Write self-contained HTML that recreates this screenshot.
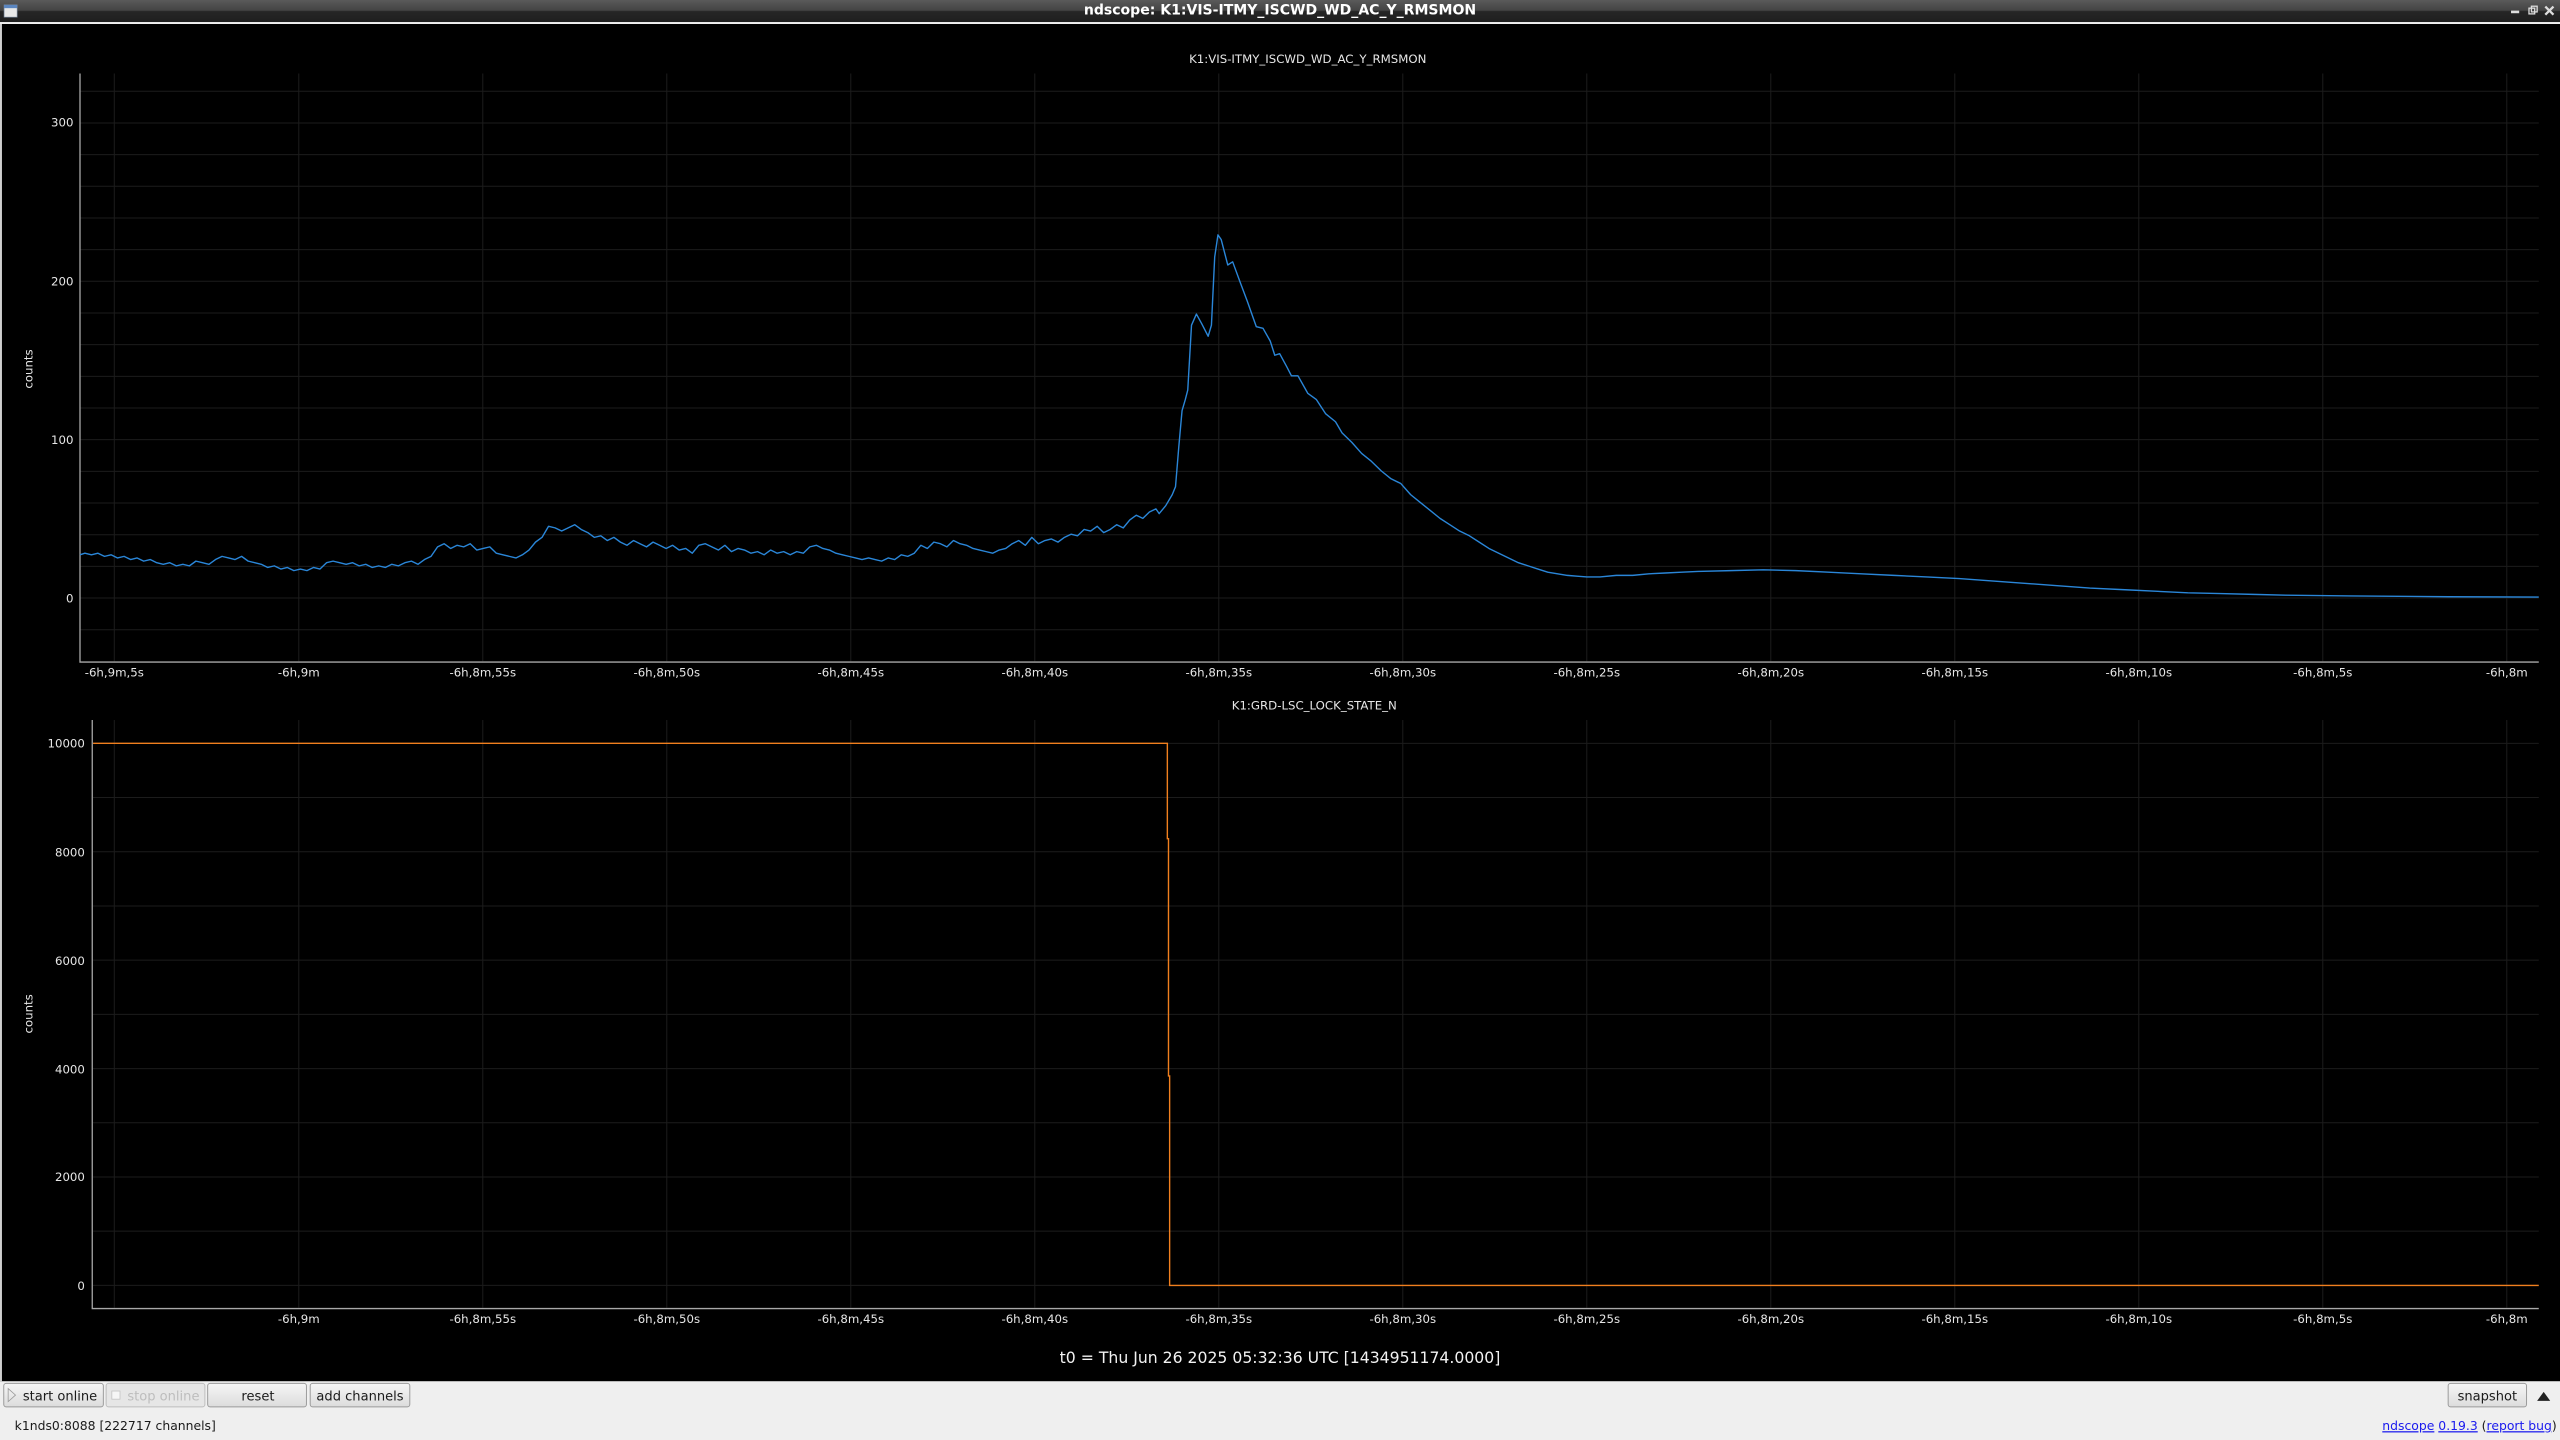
<!DOCTYPE html>
<html><head><meta charset="utf-8">
<style>
html,body{margin:0;padding:0;background:#000;overflow:hidden}
svg{display:block}
text{font-family:"DejaVu Sans","Liberation Sans",sans-serif}
</style></head>
<body>
<svg width="2560" height="1440" viewBox="0 0 1568 882" preserveAspectRatio="none" xmlns="http://www.w3.org/2000/svg">
<defs>
<linearGradient id="tb" x1="0" y1="0" x2="0" y2="1">
<stop offset="0" stop-color="#5a5a5a"/><stop offset="0.45" stop-color="#444"/><stop offset="0.5" stop-color="#262626"/><stop offset="1" stop-color="#1e1e1e"/>
</linearGradient>
<linearGradient id="btn" x1="0" y1="0" x2="0" y2="1">
<stop offset="0" stop-color="#f6f6f6"/><stop offset="1" stop-color="#dcdcdc"/>
</linearGradient>
</defs>
<!-- title bar -->
<rect x="0" y="0" width="1568" height="14" fill="url(#tb)"/>
<rect x="0" y="13.5" width="1568" height="1.2" fill="#f0f0f0"/>
<rect x="2.5" y="3" width="8" height="7.5" fill="#e8e8e8" stroke="#7a8aa0" stroke-width="0.4"/>
<rect x="2.5" y="3" width="8" height="2" fill="#5b86c0"/>
<text x="784" y="9" text-anchor="middle" font-size="8.6" font-weight="bold" fill="#fff">ndscope: K1:VIS-ITMY_ISCWD_WD_AC_Y_RMSMON</text>
<rect x="1538" y="6.5" width="5" height="1.6" fill="#ddd"/>
<rect x="1549" y="5" width="3.5" height="3.5" fill="none" stroke="#ddd" stroke-width="0.8"/>
<rect x="1550.5" y="3.8" width="3.5" height="3.5" fill="none" stroke="#ddd" stroke-width="0.8"/>
<path d="M1559 4 L1564 9 M1564 4 L1559 9" stroke="#ddd" stroke-width="1.4"/>
<!-- black area -->
<rect x="0" y="14.7" width="1568" height="831.3" fill="#000"/>
<rect x="0" y="14.7" width="1.2" height="831.3" fill="#cfcfcf"/>

<!-- TOP PLOT grid -->
<g stroke="#1c1c1c" stroke-width="1" vector-effect="non-scaling-stroke">
<path vector-effect="non-scaling-stroke" d="M49 55.9H1555 M49 75.3H1555 M49 94.7H1555 M49 114.1H1555 M49 133.5H1555 M49 152.9H1555 M49 172.3H1555 M49 191.7H1555 M49 211.1H1555 M49 230.5H1555 M49 249.9H1555 M49 269.3H1555 M49 288.7H1555 M49 308.1H1555 M49 327.5H1555 M49 346.9H1555 M49 366.3H1555 M49 385.7H1555"/>
<path vector-effect="non-scaling-stroke" d="M70 45V405 M183 45V405 M295.7 45V405 M408.4 45V405 M521.1 45V405 M633.8 45V405 M746.5 45V405 M859.2 45V405 M971.9 45V405 M1084.6 45V405 M1197.3 45V405 M1310 45V405 M1422.7 45V405 M1535.4 45V405"/>
</g>
<path d="M49 45V405.5H1555" fill="none" stroke="#a8a8a8" stroke-width="1.3" vector-effect="non-scaling-stroke"/>
<g font-size="7.2" fill="#e6e6e6">
<text x="801" y="38.5" text-anchor="middle">K1:VIS-ITMY_ISCWD_WD_AC_Y_RMSMON</text>
<text x="45" y="77.5" text-anchor="end">300</text>
<text x="45" y="175" text-anchor="end">200</text>
<text x="45" y="272" text-anchor="end">100</text>
<text x="45" y="369" text-anchor="end">0</text>
<text transform="translate(20,226) rotate(-90)" text-anchor="middle">counts</text>
</g>
<g font-size="7.2" fill="#e6e6e6" text-anchor="middle">
<text x="70" y="414.5">-6h,9m,5s</text>
<text x="183" y="414.5">-6h,9m</text>
<text x="295.7" y="414.5">-6h,8m,55s</text>
<text x="408.4" y="414.5">-6h,8m,50s</text>
<text x="521.1" y="414.5">-6h,8m,45s</text>
<text x="633.8" y="414.5">-6h,8m,40s</text>
<text x="746.5" y="414.5">-6h,8m,35s</text>
<text x="859.2" y="414.5">-6h,8m,30s</text>
<text x="971.9" y="414.5">-6h,8m,25s</text>
<text x="1084.6" y="414.5">-6h,8m,20s</text>
<text x="1197.3" y="414.5">-6h,8m,15s</text>
<text x="1310" y="414.5">-6h,8m,10s</text>
<text x="1422.7" y="414.5">-6h,8m,5s</text>
<text x="1535.4" y="414.5">-6h,8m</text>
</g>
<g transform="translate(0,366) scale(1,-0.97)">
<polyline fill="none" stroke="#2a86d8" stroke-width="1.4" vector-effect="non-scaling-stroke" stroke-linejoin="round" points="49,27 52,28 56,27 60,28 64,26 68,27 72,25 76,26 80,24 84,25 88,23 92,24 96,22 100,21 104,22 108,20 112,21 116,20 120,23 124,22 128,21 132,24 136,26 140,25 144,24 148,26 152,23 156,22 160,21 164,19 168,20 172,18 176,19 180,17 184,18 188,17 192,19 196,18 200,22 204,23 208,22 212,21 216,22 220,20 224,21 228,19 232,20 236,19 240,21 244,20 248,22 252,23 256,21 260,24 264,26 268,32 272,34 276,31 280,33 284,32 288,34 292,30 296,31 300,32 304,28 308,27 312,26 316,25 320,27 324,30 328,35 332,38 336,45 340,44 344,42 348,44 352,46 356,43 360,41 364,38 368,39 372,36 376,38 380,35 384,33 388,36 392,34 396,32 400,35 404,33 408,31 412,33 416,30 420,31 424,28 428,33 432,34 436,32 440,30 444,33 448,29 452,31 456,30 460,28 464,29 468,27 472,30 476,28 480,29 484,27 488,29 492,28 496,32 500,33 504,31 508,30 512,28 516,27 520,26 524,25 528,24 532,25 536,24 540,23 544,25 548,24 552,27 556,26 560,28 564,33 568,31 572,35 576,34 580,32 584,36 588,34 592,33 596,31 600,30 604,29 608,28 612,30 616,31 620,34 624,36 628,33 632,38 636,34 640,36 644,37 648,35 652,38 656,40 660,39 664,43 668,42 672,45 676,41 680,43 684,46 688,44 692,49 696,52 700,50 704,54 708,56 710,53 714,58 718,65 720,70 722,95 724,118 726,125 727.5,131 729.8,172 732.8,179 736,173 740,165 742,172 744,215 746,229 748,226 752,210 755,212 760,198 764,187 769.5,171 773.6,170 778,162 780.8,153 783.8,154 788,146 791,140 795,140 801,129 806.3,125 812,116 818,111 822,104 828,98 834,91 840,86 846,80 852,75 858,72 864,65 870,60 876,55 882,50 888,46 894,42 900,39 906,35 912,31 918,28 924,25 930,22 936,20 942,18 948,16 954,15 960,14 966,13.5 972,13 980,13 990,14 1000,14 1010,15 1020,15.5 1030,16 1040,16.5 1060,17 1080,17.5 1100,17 1120,16 1140,15 1160,14 1180,13 1200,12 1220,10.5 1240,9 1260,7.5 1280,6 1300,5 1320,4 1340,3 1360,2.5 1380,2 1400,1.5 1440,1 1500,0.5 1555,0.3"/>
</g>

<!-- BOTTOM PLOT grid -->
<g stroke="#1c1c1c" stroke-width="1">
<path vector-effect="non-scaling-stroke" d="M57 455.3H1555 M57 488.5H1555 M57 521.7H1555 M57 554.9H1555 M57 588.1H1555 M57 621.3H1555 M57 654.5H1555 M57 687.7H1555 M57 720.9H1555 M57 754.1H1555 M57 787.3H1555"/>
<path vector-effect="non-scaling-stroke" d="M70 441V801 M183 441V801 M295.7 441V801 M408.4 441V801 M521.1 441V801 M633.8 441V801 M746.5 441V801 M859.2 441V801 M971.9 441V801 M1084.6 441V801 M1197.3 441V801 M1310 441V801 M1422.7 441V801 M1535.4 441V801"/>
</g>
<path d="M56.5 441V801.5H1555" fill="none" stroke="#a8a8a8" stroke-width="1.3" vector-effect="non-scaling-stroke"/>
<g font-size="7.2" fill="#e6e6e6">
<text x="805" y="434.5" text-anchor="middle">K1:GRD-LSC_LOCK_STATE_N</text>
<text x="52" y="458" text-anchor="end">10000</text>
<text x="52" y="524.5" text-anchor="end">8000</text>
<text x="52" y="591" text-anchor="end">6000</text>
<text x="52" y="657.5" text-anchor="end">4000</text>
<text x="52" y="723.5" text-anchor="end">2000</text>
<text x="52" y="790" text-anchor="end">0</text>
<text transform="translate(20,621) rotate(-90)" text-anchor="middle">counts</text>
</g>
<g font-size="7.2" fill="#e6e6e6" text-anchor="middle">
<text x="183" y="810.5">-6h,9m</text>
<text x="295.7" y="810.5">-6h,8m,55s</text>
<text x="408.4" y="810.5">-6h,8m,50s</text>
<text x="521.1" y="810.5">-6h,8m,45s</text>
<text x="633.8" y="810.5">-6h,8m,40s</text>
<text x="746.5" y="810.5">-6h,8m,35s</text>
<text x="859.2" y="810.5">-6h,8m,30s</text>
<text x="971.9" y="810.5">-6h,8m,25s</text>
<text x="1084.6" y="810.5">-6h,8m,20s</text>
<text x="1197.3" y="810.5">-6h,8m,15s</text>
<text x="1310" y="810.5">-6h,8m,10s</text>
<text x="1422.7" y="810.5">-6h,8m,5s</text>
<text x="1535.4" y="810.5">-6h,8m</text>
</g>
<polyline fill="none" stroke="#f07f1e" stroke-width="1.4" vector-effect="non-scaling-stroke" points="57,455.3 715,455.3 715,513.7 715.7,513.7 715.7,659 716.4,659 716.4,787.3 1555,787.3"/>

<text x="784" y="835" text-anchor="middle" font-size="9.6" fill="#f2f2f2">t0 = Thu Jun 26 2025 05:32:36 UTC [1434951174.0000]</text>

<!-- bottom bar -->
<rect x="0" y="846" width="1568" height="36" fill="#efefef"/>
<g stroke="#9a9a9a" stroke-width="0.6">
<rect x="2.3" y="847.3" width="61" height="14.4" rx="1.5" fill="url(#btn)"/>
<rect x="65" y="847.3" width="60.5" height="14.4" rx="1.5" fill="#e6e6e6" stroke="#bdbdbd"/>
<rect x="127.2" y="847.3" width="60.5" height="14.4" rx="1.5" fill="url(#btn)"/>
<rect x="190" y="847.3" width="61" height="14.4" rx="1.5" fill="url(#btn)"/>
<rect x="1499.5" y="847.3" width="48" height="14.4" rx="1.5" fill="url(#btn)"/>
</g>
<path d="M5 850.5 L9.5 854.5 L5 858.5Z" fill="none" stroke="#9a9a9a" stroke-width="0.5"/>
<rect x="68.5" y="852" width="5" height="5" fill="#f6f6f6" stroke="#c4c4c4" stroke-width="0.5"/>
<path d="M1554 858 L1558 852.5 L1562 858Z" fill="#222"/>
<g font-size="8" fill="#1a1a1a">
<text x="14" y="857.8">start online</text>
<text x="78" y="857.8" fill="#bdbdbd">stop online</text>
<text x="158" y="857.8" text-anchor="middle">reset</text>
<text x="220.5" y="857.8" text-anchor="middle">add channels</text>
<text x="1523.5" y="857.8" text-anchor="middle">snapshot</text>
<text x="9" y="876" font-size="7.6">k1nds0:8088  [222717 channels]</text>
</g>
<g font-size="7.6">
<text x="1566" y="876" text-anchor="end" fill="#1a1a1a"><tspan fill="#1a1aee" text-decoration="underline">ndscope</tspan> <tspan fill="#1a1aee" text-decoration="underline">0.19.3</tspan> (<tspan fill="#1a1aee" text-decoration="underline">report bug</tspan>)</text>
</g>
</svg>
</body></html>
